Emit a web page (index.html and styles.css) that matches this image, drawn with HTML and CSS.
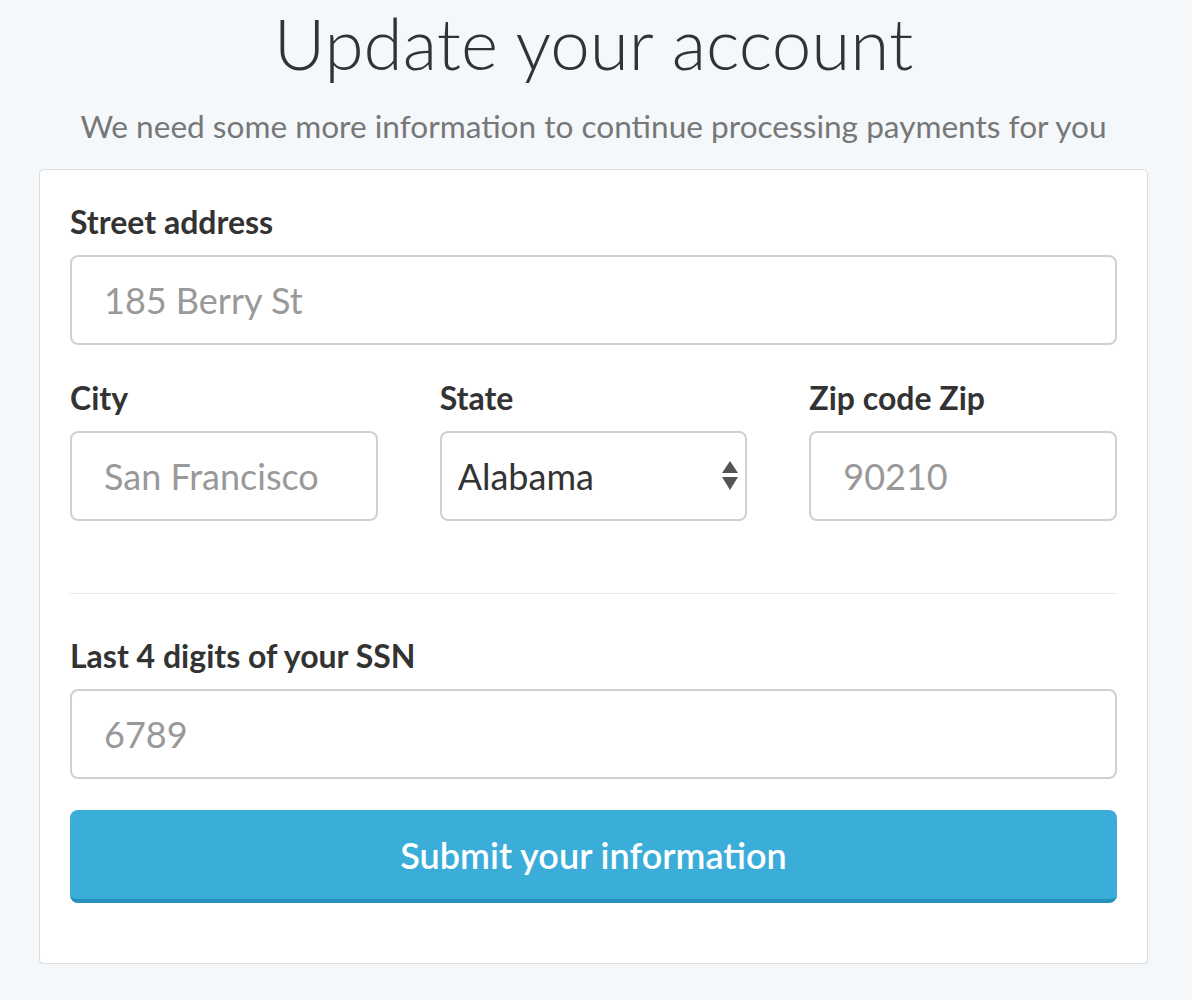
FILE: index.html
```html
<!DOCTYPE html>
<html>
<head>
<meta charset="utf-8">
<link rel="stylesheet" href="styles.css">
</head>
<body>
<div class="page">
  <h1 class="title">Update your account</h1>
  <p class="subtitle">We need some more information to continue processing payments for you</p>
  <form class="card">
    <div class="field field-street">
      <label class="label">Street address</label>
      <input class="input" type="text" placeholder="185 Berry St">
    </div>
    <div class="row">
      <div class="field">
        <label class="label">City</label>
        <input class="input" type="text" placeholder="San Francisco">
      </div>
      <div class="field">
        <label class="label">State</label>
        <div class="select-wrap">
          <select class="input select">
            <option>Alabama</option>
          </select>
          <svg class="select-arrows" width="18" height="32" viewBox="0 0 18 32">
            <path d="M9 1 L17 13 L1 13 Z" fill="#555"/>
            <path d="M1 17 L17 17 L9 30 Z" fill="#555"/>
          </svg>
        </div>
      </div>
      <div class="field">
        <label class="label">Zip code Zip</label>
        <input class="input" type="text" placeholder="90210">
      </div>
    </div>
    <hr class="divider">
    <div class="field field-ssn">
      <label class="label">Last 4 digits of your SSN</label>
      <input class="input" type="text" placeholder="6789">
    </div>
    <button class="button" type="button">Submit your information</button>
  </form>
</div>
</body>
</html>
```

FILE: styles.css
```css
html, body {
  margin: 0;
  padding: 0;
  background: #f5f8fb;
}
body {
  font-family: Lato, "Open Sans", sans-serif;
  color: #333;
}
.page {
  width: 1109px;
  margin-left: 39px;
  padding-top: 3px;
}
.title {
  margin: 0;
  font-size: 71px;
  line-height: 80px;
  font-weight: 300;
  text-align: center;
  color: #333;
}
.subtitle {
  margin: 23px 0 23px;
  font-size: 31.6px;
  line-height: 40px;
  text-align: center;
  color: #777;
}
.card {
  background: #fff;
  border: 1px solid #dcdcdc;
  border-radius: 5px;
  box-shadow: 0 1px 0 #e2e2e2;
  padding: 32px 30px 60px;
}
.field {
  display: flex;
  flex-direction: column;
}
.field-street {
  margin-bottom: 33px;
}
.label {
  font-size: 32px;
  line-height: 40px;
  font-weight: 700;
  color: #333;
  margin-bottom: 13px;
}
.input {
  box-sizing: border-box;
  height: 90px;
  width: 100%;
  border: 2px solid #d0d0d0;
  border-radius: 8px;
  padding: 0 32px;
  font-family: Lato, "Open Sans", sans-serif;
  font-size: 36px;
  color: #333;
  background: #fff;
  outline: none;
}
.input::placeholder {
  color: #999;
}
.row {
  display: grid;
  grid-template-columns: 1fr 1fr 1fr;
  column-gap: 62px;
}
.select-wrap {
  position: relative;
}
.select {
  appearance: none;
  -webkit-appearance: none;
  padding: 0 16px;
  color: #333;
}
.select-arrows {
  position: absolute;
  right: 8px;
  top: 29px;
  pointer-events: none;
}
.divider {
  border: 0;
  border-top: 1px solid #eaeaea;
  margin: 72px 0 42px;
}
.field-ssn {
  margin-bottom: 31px;
}
.button {
  display: block;
  width: 100%;
  height: 93px;
  box-sizing: border-box;
  border: 0;
  border-bottom: 4px solid #2591bc;
  border-radius: 8px;
  background: #3badd9;
  color: #fff;
  font-family: Lato, "Open Sans", sans-serif;
  font-size: 36px;
  font-weight: 600;
  cursor: pointer;
}
```
